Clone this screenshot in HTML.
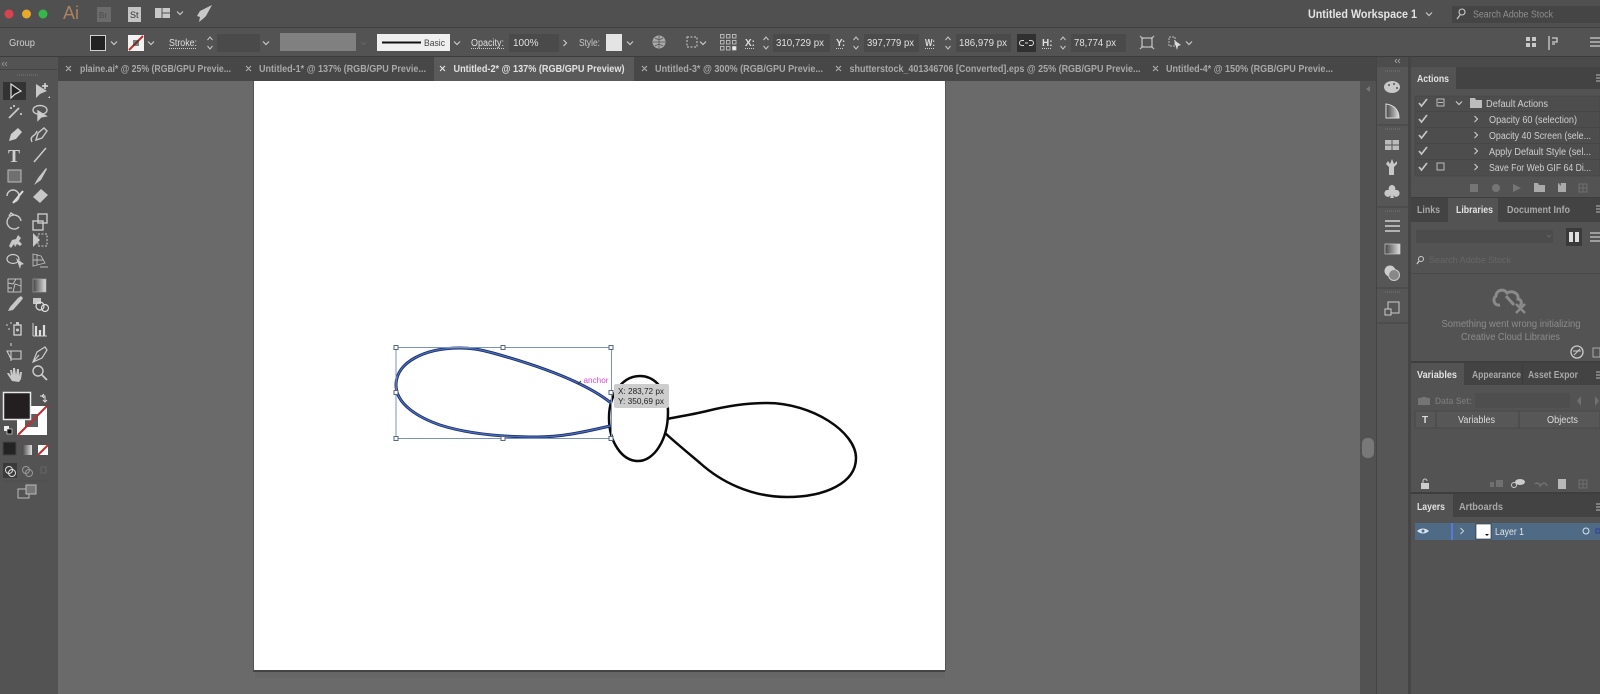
<!DOCTYPE html>
<html><head><meta charset="utf-8"><style>
html,body{margin:0;padding:0;width:1600px;height:694px;overflow:hidden;background:#535353}
svg{display:block;filter:blur(.35px)}
text{font-family:"Liberation Sans",sans-serif}
.t{fill:#cfcfcf;font-size:10px}
.b{fill:#e2e2e2;font-size:10px;font-weight:bold}
.d{fill:#a8a8a8;font-size:10px;font-weight:bold}
.i{fill:none;stroke:#c8c8c8;stroke-width:1.4}
.f{fill:#c8c8c8}
.c{fill:none;stroke:#c4c4c4;stroke-width:1.2}
</style></head><body>
<svg width="1600" height="694" viewBox="0 0 1600 694" xmlns="http://www.w3.org/2000/svg">
<defs>
<g id="chev"><path d="M-3 -1.5L0 1.5L3 -1.5" fill="none" stroke="#c8c8c8" stroke-width="1.2"/></g>
<g id="spin"><path d="M-2.5 -3L0 -6L2.5 -3M-2.5 3L0 6L2.5 3" fill="none" stroke="#c8c8c8" stroke-width="1"/></g>
<g id="rchev"><path d="M-1.500 -3L1.500 0L-1.500 3" fill="none" stroke="#c8c8c8" stroke-width="1.2"/></g>
<g id="check"><path d="M-4 0L-1.500 3L4 -4" fill="none" stroke="#c4c4c4" stroke-width="1.700"/></g>
<g id="ham"><path d="M-2 -3H2M-2 0H2M-2 3H2" stroke="#bbb" stroke-width="1"/></g>
<g id="tri"><path d="M0 2L2 0V2Z" fill="#ddd"/></g>
<linearGradient id="g1" x1="0" x2="1"><stop offset="0" stop-color="#444"/><stop offset="1" stop-color="#ddd"/></linearGradient>
</defs>

<!-- base -->
<rect width="1600" height="694" fill="#535353"/>
<rect x="0" y="0" width="1600" height="27" fill="#505050"/>
<rect x="0" y="27" width="1600" height="1" fill="#404040"/>
<rect x="0" y="28" width="1600" height="28" fill="#535353"/>
<rect x="0" y="56" width="1600" height="1" fill="#3c3c3c"/>

<!-- canvas -->
<rect x="58" y="81" width="1302" height="613" fill="#6a6a6a"/>
<rect x="57" y="81" width="1" height="613" fill="#444"/>
<rect x="253" y="81" width="692" height="590" fill="#fff"/>
<rect x="253" y="670" width="692" height="2" fill="#444"/>
<rect x="253" y="81" width="1" height="590" fill="#555"/>
<rect x="945" y="81" width="1" height="590" fill="#555"/>
<rect x="255" y="672" width="690" height="6" fill="#666"/>

<!-- tab bar -->
<rect x="58" y="57" width="1302" height="24" fill="#474747"/>
<rect x="434" y="57" width="200" height="24" fill="#5a5a5a"/>
<rect x="0" y="57" width="58" height="637" fill="#535353"/>
<g fill="none" stroke="#b5b5b5" stroke-width="1">
<path d="M66 66l5 5M71 66l-5 5M246 66l5 5M251 66l-5 5M836 66l5 5M841 66l-5 5M1153 66l5 5M1158 66l-5 5M642 66l5 5M647 66l-5 5"/>
<path d="M440 66l5 5M445 66l-5 5" stroke="#eee"/>
</g>
<text class="d" x="80" y="72" textLength="151" lengthAdjust="spacingAndGlyphs">plaine.ai* @ 25% (RGB/GPU Previe...</text>
<text class="d" x="259" y="72" textLength="167" lengthAdjust="spacingAndGlyphs">Untitled-1* @ 137% (RGB/GPU Previe...</text>
<text class="b" x="453.500" y="72" textLength="171" lengthAdjust="spacingAndGlyphs" fill="#eee">Untitled-2* @ 137% (RGB/GPU Preview)</text>
<text class="d" x="655" y="72" textLength="168" lengthAdjust="spacingAndGlyphs">Untitled-3* @ 300% (RGB/GPU Previe...</text>
<text class="d" x="849.500" y="72" textLength="291" lengthAdjust="spacingAndGlyphs">shutterstock_401346706 [Converted].eps @ 25% (RGB/GPU Previe...</text>
<text class="d" x="1166" y="72" textLength="167" lengthAdjust="spacingAndGlyphs">Untitled-4* @ 150% (RGB/GPU Previe...</text>

<!-- top bar -->
<circle cx="9" cy="14" r="4.500" fill="#d9434f"/>
<circle cx="26.500" cy="14" r="4.500" fill="#e6a92a"/>
<circle cx="43" cy="14" r="4.500" fill="#35b84a"/>
<text x="63" y="19" font-size="18" fill="#ab8260" textLength="16" lengthAdjust="spacingAndGlyphs">Ai</text>
<rect x="97" y="7" width="14" height="15" fill="#6b6b6b"/>
<text x="99" y="18" font-size="8" fill="#4c4c4c">Br</text>
<rect x="128" y="7" width="13" height="15" fill="#c4c4c4"/>
<text x="130" y="18" font-size="9" fill="#333">St</text>
<rect x="155" y="8" width="15" height="10" fill="#c8c8c8"/>
<path d="M162 8v10M162 13h8" stroke="#505050" stroke-width="1"/>
<use href="#chev" x="180" y="13"/>
<path d="M212 5L200 11L197 16L200 17L199 22L204 18L206 16Z" fill="#c8c8c8"/>
<text x="1308" y="18" font-size="11.500" font-weight="bold" fill="#e4e4e4" textLength="109" lengthAdjust="spacingAndGlyphs">Untitled Workspace 1</text>
<use href="#chev" x="1429" y="14"/>
<rect x="1452" y="6" width="148" height="17" fill="#454545"/>
<circle cx="1462" cy="12" r="3" fill="none" stroke="#ccc" stroke-width="1.100"/>
<path d="M1460 15l-3 4" stroke="#ccc" stroke-width="1.200"/>
<text x="1473" y="17.500" font-size="10" fill="#8f8f8f" textLength="80" lengthAdjust="spacingAndGlyphs">Search Adobe Stock</text>

<!-- control bar -->
<text x="9" y="46" font-size="10" fill="#cfcfcf" textLength="26" lengthAdjust="spacingAndGlyphs">Group</text>
<rect x="90.500" y="35.500" width="15" height="15" fill="#222" stroke="#d0d0d0" stroke-width="1"/>
<use href="#chev" x="114" y="43"/>
<rect x="128" y="35" width="16" height="16" fill="#f2f2f2"/>
<path d="M129 50L143 36" stroke="#c03030" stroke-width="2"/>
<rect x="133" y="40" width="6" height="6" fill="#333" opacity=".6"/>
<use href="#chev" x="151" y="43"/>
<text x="169" y="46" font-size="10" fill="#dedede" textLength="28" lengthAdjust="spacingAndGlyphs">Stroke:</text>
<path d="M169 48.500h28" stroke="#ccc" stroke-dasharray="1 1"/>
<use href="#spin" x="210" y="43"/>
<rect x="217" y="34" width="43" height="18" fill="#4a4a4a"/>
<use href="#chev" x="266" y="43"/>
<rect x="280" y="33" width="76" height="18" fill="#808080"/>
<path d="M361 42l2.500 2.500 2.500-2.500" fill="none" stroke="#666"/>
<rect x="377" y="34" width="73" height="17" fill="#efefef"/>
<rect x="382" y="41.500" width="39" height="2" fill="#111"/>
<text x="424" y="46" font-size="9" fill="#444" textLength="21" lengthAdjust="spacingAndGlyphs">Basic</text>
<use href="#chev" x="457" y="43"/>
<text x="471" y="46" font-size="10" fill="#dedede" textLength="33" lengthAdjust="spacingAndGlyphs">Opacity:</text>
<path d="M471 48.500h33" stroke="#ccc" stroke-dasharray="1 1"/>
<rect x="509" y="34" width="50" height="18" fill="#4a4a4a"/>
<text x="513" y="46" font-size="10" fill="#e0e0e0">100%</text>
<use href="#rchev" x="565" y="43"/>
<text x="579" y="46" font-size="10" fill="#c8c8c8" textLength="21" lengthAdjust="spacingAndGlyphs">Style:</text>
<rect x="606" y="34" width="16" height="17" fill="#e4e4e4"/>
<use href="#chev" x="630" y="43"/>
<circle cx="659" cy="42" r="6.500" fill="#aaa"/>
<path d="M653 42h12M659 36v12M655 38q4 3 8 0M655 46q4-3 8 0" stroke="#555" fill="none" stroke-width=".8"/>
<rect x="687" y="37" width="10" height="10" fill="none" stroke="#cfcfcf" stroke-dasharray="2 1.500"/>
<use href="#chev" x="703" y="43"/>
<g fill="none" stroke="#cfcfcf" stroke-width=".8">
<rect x="720.500" y="34.500" width="3.500" height="3.500"/><rect x="726.500" y="34.500" width="3.500" height="3.500"/><rect x="732.500" y="34.500" width="3.500" height="3.500"/>
<rect x="720.500" y="40.500" width="3.500" height="3.500"/><rect x="726.500" y="40.500" width="3.500" height="3.500"/><rect x="732.500" y="40.500" width="3.500" height="3.500"/>
<rect x="720.500" y="46.500" width="3.500" height="3.500"/><rect x="726.500" y="46.500" width="3.500" height="3.500"/><rect x="732.500" y="46.500" width="3.500" height="3.500" fill="#eee"/>
</g>
<text x="745" y="46" font-size="10" fill="#dedede" font-weight="bold">X:</text>
<path d="M745 48.500h9" stroke="#ccc" stroke-dasharray="1 1"/>
<use href="#spin" x="766" y="43"/>
<rect x="773" y="34" width="57" height="18" fill="#4a4a4a"/>
<text x="776" y="46" font-size="10" fill="#e0e0e0" textLength="48" lengthAdjust="spacingAndGlyphs">310,729 px</text>
<text x="836" y="46" font-size="10" fill="#dedede" font-weight="bold">Y:</text>
<path d="M836 48.500h8" stroke="#ccc" stroke-dasharray="1 1"/>
<use href="#spin" x="856" y="43"/>
<rect x="864" y="34" width="55" height="18" fill="#4a4a4a"/>
<text x="867" y="46" font-size="10" fill="#e0e0e0" textLength="47" lengthAdjust="spacingAndGlyphs">397,779 px</text>
<text x="925" y="46" font-size="10" fill="#dedede" font-weight="bold" textLength="10" lengthAdjust="spacingAndGlyphs">W:</text>
<path d="M925 48.500h10" stroke="#ccc" stroke-dasharray="1 1"/>
<use href="#spin" x="948" y="43"/>
<rect x="956" y="34" width="55" height="18" fill="#4a4a4a"/>
<text x="959" y="46" font-size="10" fill="#e0e0e0" textLength="48" lengthAdjust="spacingAndGlyphs">186,979 px</text>
<rect x="1017" y="34" width="19" height="18" fill="#303030"/>
<path d="M1025 43h3M1024 40.500h-2a2.500 2.500 0 0 0 0 5h2M1029 40.500h2a2.500 2.500 0 0 1 0 5h-2" fill="none" stroke="#ddd" stroke-width="1"/>
<text x="1042" y="46" font-size="10" fill="#dedede" font-weight="bold">H:</text>
<path d="M1042 48.500h9" stroke="#ccc" stroke-dasharray="1 1"/>
<use href="#spin" x="1063" y="43"/>
<rect x="1071" y="34" width="55" height="18" fill="#4a4a4a"/>
<text x="1074" y="46" font-size="10" fill="#e0e0e0" textLength="42" lengthAdjust="spacingAndGlyphs">78,774 px</text>
<g class="c"><rect x="1142" y="38" width="10" height="9"/><path d="M1140 36l3 3M1154 36l-3 3M1140 49l3-3M1154 49l-3-3"/></g>
<rect x="1169" y="37" width="6" height="9" fill="none" stroke="#bbb" stroke-dasharray="2 1"/>
<path d="M1174 40l7 5-3 1-1 4Z" fill="#ddd"/>
<use href="#chev" x="1189" y="43"/>
<g class="f"><rect x="1526" y="37" width="4" height="4"/><rect x="1532" y="37" width="4" height="4"/><rect x="1526" y="43" width="4" height="4"/><rect x="1532" y="43" width="4" height="4"/></g>
<path d="M1549 36v14M1552 38h5v4h-5M1552 44h3" fill="none" stroke="#cfcfcf" stroke-width="1.300"/>
<path d="M1590 38h10M1590 42h10M1590 46h10" stroke="#cfcfcf" stroke-width="1.300"/>

<!-- left tool strip -->
<path d="M4 62l-2 2 2 2M7 62l-2 2 2 2" fill="none" stroke="#999" stroke-width=".8"/>
<rect x="0" y="69" width="57" height="1" fill="#444"/>
<path d="M17 75h22" stroke="#777" stroke-dasharray="1 1"/>
<rect x="3" y="82" width="23" height="18" fill="#333"/>
<path d="M11 84L11 98L14.500 94.500L21 91Z" fill="#222" stroke="#ddd" stroke-width="1.200"/>
<path d="M36 84L36 98L40 94L47 91Z" class="f"/><path d="M42 86h6M45 83v6" stroke="#ddd" stroke-width="1.500"/>
<use href="#tri" x="48" y="96"/>
<g class="i">
<path d="M9 118L19 108M10 108h2M14 105v2M20 114h2" stroke-width="1.800"/>
<ellipse cx="40" cy="110" rx="7" ry="4.500"/>
<path d="M38 111l0 9 3-3 5-1Z" fill="#cfcfcf"/>
<path d="M9 141l2-7 7-6 4 4-6 7Z M9 141l5-5" fill="#cfcfcf" stroke="none"/>
<path d="M32 142q-2-4 1-6t4-5M36 140l2-7 6-5 3 3-5 7Z"/>
</g>
<text x="8" y="162" font-size="18" font-weight="bold" fill="#cfcfcf" style="font-family:'Liberation Serif',serif">T</text>
<path d="M34 162L46 148" stroke="#cfcfcf" stroke-width="1.400"/>
<rect x="8" y="170" width="13" height="12" fill="#707070" stroke="#bbb"/>
<path d="M34 185L38 178L46 168L47 169L41 180Z" class="f"/>
<path d="M7 196a6 6 0 1 1 6 6" fill="none" stroke="#ccc" stroke-width="1.400"/><path d="M13 203L23 191" stroke="#ddd" stroke-width="2"/>
<path d="M33 197L41 189L48 195L40 203Z" class="f"/>
<g class="i">
<path d="M21 221a7 7 0 1 0-2 6M9 216l2-3 3 2"/>
<rect x="33" y="221" width="10" height="9"/><rect x="38" y="214" width="9" height="9"/>
</g>
<path d="M9 246l3-6 4-1 2-4 3 3-2 3 3 3-2 2-3-2-2 3-1-3-3 4Z" class="f"/>
<path d="M33 233l7 7-7 7Z" class="f"/><rect x="38" y="234" width="9" height="12" fill="none" stroke="#ccc" stroke-dasharray="2 1.500"/>
<ellipse cx="13" cy="259" rx="6" ry="4.500" fill="none" stroke="#ccc" stroke-width="1.200"/><path d="M16 258l8 6-3 1-1 4Z" class="f"/>
<path d="M33 254l8 2 4 7-12 3Z M37 254v11M33 260l10 0" fill="none" stroke="#bbb" stroke-width=".9"/><path d="M40 267h8" stroke="#bbb"/>
<g fill="none" stroke="#c8c8c8" stroke-width=".9"><rect x="8" y="279" width="13" height="13"/><path d="M8 283l5 1 3-5M21 286l-6-2-2 8M8 288l4 0"/></g>
<rect x="33" y="279" width="13" height="13" fill="url(#g1)" stroke="#aaa" stroke-width=".6"/>
<path d="M8 311l2-4 8-9 3-2 2 2-2 3-8 9Z" class="f"/>
<rect x="33" y="298" width="8" height="6" class="f"/><circle cx="40" cy="306" r="4" fill="none" stroke="#ddd" stroke-width="1.200"/><circle cx="45" cy="308" r="3.500" fill="none" stroke="#ddd" stroke-width="1.200"/>
<rect x="14" y="325" width="7" height="10" fill="none" stroke="#ddd" stroke-width="1.200"/><circle cx="17.500" cy="330" r="1.500" class="f"/><path d="M6 325h2M10 323h2M8 329h2" stroke="#ccc"/><rect x="16" y="322" width="3" height="3" class="f"/>
<path d="M33 336V323M33 336h14" stroke="#ccc" stroke-width="1" fill="none"/><path d="M36 326v10M40 330v6M44 325v11" stroke="#ddd" stroke-width="2.200"/>
<path d="M11 346v-3M7 351h14V359H11Z M11 351V361" fill="none" stroke="#ccc" stroke-width="1.100"/>
<path d="M33 362L37 352L45 347L47 350L42 358Z M33 362l6-7" fill="none" stroke="#ccc" stroke-width="1.200"/>
<path d="M12 381l-4-6-1-2 2 0 2 3-1-6 2 0 1 5 0-7 2 0 1 7 1-6 2 0 0 7 1-4 2 0-1 7-2 3Z" class="f"/>
<circle cx="38" cy="371" r="5" fill="none" stroke="#ccc" stroke-width="1.400"/><path d="M42 375l5 5" stroke="#ccc" stroke-width="1.800"/>

<!-- fill/stroke -->
<path d="M40 396h5v6M43 400l2 2 2-2M44 394l-2 2 2 2" fill="none" stroke="#ddd" stroke-width="1"/>
<rect x="17" y="406" width="30" height="29" fill="#fff"/>
<rect x="25" y="414" width="13" height="13" fill="#5e5e5e"/>
<path d="M18 435L47 406" stroke="#b92f34" stroke-width="2"/>
<rect x="3.500" y="392.500" width="27" height="27" fill="#231f20" stroke="#e8e8e8" stroke-width="1.500"/>
<rect x="4" y="426" width="5" height="5" fill="#eee"/><rect x="7" y="429" width="5" height="5" fill="#111" stroke="#eee" stroke-width=".6"/>
<rect x="3" y="442" width="13" height="13" fill="#232323" stroke="#444"/>
<rect x="22" y="445" width="10" height="10" fill="url(#g1)"/>
<rect x="38" y="445" width="10" height="10" fill="#fff"/><path d="M38 455L48 445" stroke="#c03030" stroke-width="2"/>
<rect x="3" y="463" width="14" height="15" fill="#3a3a3a"/>
<circle cx="9" cy="470" r="3.500" fill="none" stroke="#ddd"/><circle cx="12" cy="473" r="3.500" fill="none" stroke="#ddd"/>
<circle cx="26" cy="470" r="3.500" fill="none" stroke="#999"/><circle cx="29" cy="473" r="3.500" fill="none" stroke="#999"/>
<rect x="41" y="467" width="5" height="6" fill="none" stroke="#666"/>
<path d="M3 481h45" stroke="#4c4c4c"/>
<rect x="18" y="489" width="11" height="9" fill="none" stroke="#bbb"/><rect x="26" y="485" width="10" height="9" fill="#777" stroke="#bbb"/>

<!-- artwork -->
<path d="M667 419C682 416 695 414 707 411C727 406 747 403 767 403C812 403 856 432 856 458C856 483 825 497 787 497C750 497 720 481 700 463C687 452 676 443 665 433" fill="none" stroke="#0a0a0a" stroke-width="2.500"/>
<path d="M640 376C622 376 609 395 609 418C609 442 622 461 638 461C654 461 668 440 668 412C668 392 656 376 640 376Z" fill="none" stroke="#0a0a0a" stroke-width="2.500"/>
<path d="M611 403C585 382 540 366 493 353C478 349 470 348 460 348C425 348 396 362 396 385C396 405 420 418 440 425C465 433 500 437 537 437C560 437 580 433 610 426" fill="none" stroke="#1c2f68" stroke-width="3"/>
<path d="M611 403C585 382 540 366 493 353C478 349 470 348 460 348C425 348 396 362 396 385C396 405 420 418 440 425C465 433 500 437 537 437C560 437 580 433 610 426" fill="none" stroke="#4a6fc0" stroke-width="1.200"/>
<rect x="396" y="347.500" width="215.500" height="91" fill="none" stroke="#7b93b8" stroke-width="1"/>
<g fill="#fff" stroke="#56667e" stroke-width="1">
<rect x="394" y="345.500" width="4" height="4"/><rect x="501" y="345.500" width="4" height="4"/><rect x="609" y="345.500" width="4" height="4"/>
<rect x="394" y="390.500" width="4" height="4"/><rect x="609" y="390.500" width="4" height="4"/>
<rect x="394" y="436.500" width="4" height="4"/><rect x="501" y="436.500" width="4" height="4"/><rect x="609" y="436.500" width="4" height="4"/>
</g>
<path d="M578 384l3-3" stroke="#333" stroke-width="1"/>
<text x="583.500" y="383" font-size="8" fill="#d848d8" textLength="25" lengthAdjust="spacingAndGlyphs">anchor</text>
<rect x="614" y="384" width="55" height="24" rx="2" fill="#cdcdcd"/>
<text x="618" y="394" font-size="8" fill="#222" textLength="46" lengthAdjust="spacingAndGlyphs">X: 283,72 px</text>
<text x="618" y="404" font-size="8" fill="#222" textLength="46" lengthAdjust="spacingAndGlyphs">Y: 350,69 px</text>

<!-- scrollbar & dock -->
<rect x="1360" y="57" width="16" height="637" fill="#525252"/>
<rect x="1360" y="57" width="16" height="24" fill="#474747"/>
<path d="M1370 86l-4 3 4 3" fill="#777"/>
<rect x="1362" y="438" width="12" height="20" rx="5" fill="#787878"/>
<rect x="1376" y="57" width="1" height="637" fill="#444"/>
<rect x="1377" y="57" width="31" height="637" fill="#565656"/>
<rect x="1377" y="57" width="31" height="10" fill="#4c4c4c"/>
<rect x="1408" y="57" width="3" height="637" fill="#454545"/>
<path d="M1397 59l-2 2 2 2M1400 59l-2 2 2 2" fill="none" stroke="#aaa" stroke-width=".8"/>
<g stroke="#444"><path d="M1377 125h31M1377 207h31M1377 288h31M1377 323h31"/></g>
<g stroke="#777" stroke-dasharray="1 1"><path d="M1385 71h15M1385 129h15M1385 211h15M1385 292h15"/></g>
<ellipse cx="1392" cy="87" rx="8" ry="6" class="f"/><circle cx="1389" cy="85" r="1" fill="#555"/><circle cx="1394" cy="84" r="1" fill="#555"/><circle cx="1397" cy="88" r="1" fill="#555"/>
<path d="M1386 104v14h13c0-8-5-13-13-14Z" fill="url(#g1)" stroke="#ddd"/>
<rect x="1385" y="140" width="14" height="10" fill="#bbb"/><path d="M1392 140v10M1385 145h14" stroke="#555"/>
<path d="M1389 175v-8l-3-3 2-3 2 3 2-5 2 5 3-3 0 3-3 3v8Z" class="f"/>
<path d="M1392 185a3.500 3.500 0 0 1 3 5a3.500 3.500 0 1 1-2 5l1 3h-4l1-3a3.500 3.500 0 1 1-2-5a3.500 3.500 0 0 1 3-5Z" class="f"/>
<path d="M1385 221h15M1385 226h15M1385 231h15" stroke="#d0d0d0" stroke-width="1.600"/>
<rect x="1385" y="244" width="15" height="10" fill="url(#g1)" stroke="#ccc" stroke-width=".7"/>
<circle cx="1390" cy="271" r="5.500" fill="#ccc"/><circle cx="1394" cy="275" r="5.500" fill="#888" stroke="#ccc"/>
<rect x="1388" y="302" width="11" height="11" fill="none" stroke="#ccc"/><rect x="1385" y="309" width="6" height="6" fill="#555" stroke="#ccc"/>

<!-- top strip above panels -->
<rect x="1411" y="57" width="189" height="10" fill="#4a4a4a"/>
<!-- Actions panel -->
<rect x="1411" y="67" width="189" height="22" fill="#434343"/>
<rect x="1411" y="67" width="45" height="22" fill="#535353"/>
<text class="b" x="1417" y="82" textLength="32" lengthAdjust="spacingAndGlyphs">Actions</text>
<use href="#ham" x="1598" y="78"/>
<rect x="1411" y="89" width="189" height="109" fill="#535353"/>
<rect x="1415" y="96" width="185" height="80" fill="#4d4d4d" stroke="#444" stroke-width=".5"/>
<g stroke="#464646"><path d="M1415 111.500H1600M1415 127.500H1600M1415 143.500H1600M1415 159.500H1600"/></g>
<use href="#check" x="1423" y="103"/><use href="#check" x="1423" y="119"/><use href="#check" x="1423" y="135"/><use href="#check" x="1423" y="151"/><use href="#check" x="1423" y="167"/>
<rect x="1437" y="99" width="7" height="7" fill="none" stroke="#bbb"/><path d="M1438 102.500h5" stroke="#bbb"/>
<rect x="1437" y="163" width="7" height="7" fill="none" stroke="#bbb"/>
<use href="#chev" x="1459" y="103"/>
<path d="M1470 98h5l1 2h6v8h-12Z" fill="#bcbcbc"/>
<text class="t" x="1486" y="107" textLength="62" lengthAdjust="spacingAndGlyphs">Default Actions</text>
<use href="#rchev" x="1476" y="119"/><use href="#rchev" x="1476" y="135"/><use href="#rchev" x="1476" y="151"/><use href="#rchev" x="1476" y="167"/>
<text class="t" x="1489" y="123" textLength="88" lengthAdjust="spacingAndGlyphs">Opacity 60 (selection)</text>
<text class="t" x="1489" y="139" textLength="102" lengthAdjust="spacingAndGlyphs">Opacity 40 Screen (sele...</text>
<text class="t" x="1489" y="155" textLength="102" lengthAdjust="spacingAndGlyphs">Apply Default Style (sel...</text>
<text class="t" x="1489" y="171" textLength="102" lengthAdjust="spacingAndGlyphs">Save For Web GIF 64 Di...</text>
<rect x="1470" y="184" width="8" height="8" fill="#757575"/>
<circle cx="1496" cy="188" r="4" fill="#757575"/>
<path d="M1513 184l8 4-8 4Z" fill="#757575"/>
<path d="M1534 183h4l1 2h6v7h-11Z" fill="#aaa"/>
<path d="M1558 183h8v9h-8Z" fill="#aaa"/><path d="M1558 183l3 3v-3" fill="#666"/>
<rect x="1579" y="184" width="8" height="8" fill="none" stroke="#6f6f6f"/><path d="M1583 184v8M1579 188h8" stroke="#6f6f6f"/>

<!-- Links/Libraries -->
<rect x="1411" y="197" width="189" height="1" fill="#3e3e3e"/>
<rect x="1411" y="198" width="189" height="24" fill="#434343"/>
<rect x="1448" y="198" width="50" height="24" fill="#535353"/>
<text class="d" x="1417" y="213" textLength="23" lengthAdjust="spacingAndGlyphs">Links</text>
<text class="b" x="1456" y="213" textLength="37" lengthAdjust="spacingAndGlyphs">Libraries</text>
<text class="d" x="1507" y="213" textLength="63" lengthAdjust="spacingAndGlyphs">Document Info</text>
<use href="#ham" x="1598" y="209"/>
<rect x="1411" y="222" width="189" height="140" fill="#535353"/>
<rect x="1416" y="230" width="137" height="13" fill="#4c4c4c"/>
<path d="M1547 235l2 2 2-2" fill="none" stroke="#666"/>
<rect x="1566" y="228" width="16" height="18" fill="#3a3a3a"/>
<path d="M1569 232h4v10h-4ZM1575 232h4v10h-4Z" fill="#ddd"/>
<path d="M1590 233h10M1590 237h10M1590 241h10" stroke="#ccc" stroke-width="1.300"/>
<circle cx="1421" cy="259" r="2.500" fill="none" stroke="#ccc"/><path d="M1419 261l-2 3" stroke="#ccc" stroke-width="1.200"/>
<text x="1429" y="263" font-size="9.500" fill="#666" textLength="82" lengthAdjust="spacingAndGlyphs">Search Adobe Stock</text>
<path d="M1411 273.500H1600" stroke="#4a4a4a"/>
<g fill="none" stroke="#8a8a8a" stroke-width="3">
<path d="M1500 305c-6 1-8-6-4-9c0-6 8-8 11-3c5-3 12 0 11 6c4 1 4 5 2 7"/>
<path d="M1506 296l8 9"/><path d="M1516 304l9 9M1525 304l-9 9" stroke-width="2.500"/>
</g>
<text x="1441.500" y="327" font-size="10.500" fill="#8c8c8c" textLength="139" lengthAdjust="spacingAndGlyphs">Something went wrong initializing</text>
<text x="1461" y="340" font-size="10.500" fill="#8c8c8c" textLength="99" lengthAdjust="spacingAndGlyphs">Creative Cloud Libraries</text>
<circle cx="1577" cy="352" r="6" fill="none" stroke="#ccc" stroke-width="1.300"/><path d="M1573 351h8M1574 355l6-6" stroke="#ccc"/>
<rect x="1593" y="348" width="7" height="9" fill="none" stroke="#aaa"/>

<!-- Variables -->
<rect x="1411" y="361" width="189" height="2" fill="#3e3e3e"/>
<rect x="1411" y="363" width="189" height="22" fill="#434343"/>
<rect x="1411" y="363" width="53" height="22" fill="#535353"/>
<text class="b" x="1417" y="378" textLength="40" lengthAdjust="spacingAndGlyphs">Variables</text>
<text class="d" x="1472" y="378" textLength="49" lengthAdjust="spacingAndGlyphs">Appearance</text>
<text class="d" x="1528" y="378" textLength="50" lengthAdjust="spacingAndGlyphs">Asset Expor</text>
<path d="M1522.500 364v20" stroke="#3a3a3a"/>
<use href="#ham" x="1598" y="375"/>
<rect x="1411" y="385" width="189" height="108" fill="#535353"/>
<path d="M1418 398h3l1-1h4l1 1h3v7h-12Z" fill="#757575"/>
<text x="1435" y="404" font-size="9.500" font-weight="bold" fill="#757575" textLength="37" lengthAdjust="spacingAndGlyphs">Data Set:</text>
<rect x="1475" y="393" width="95" height="15" fill="#4e4e4e"/>
<path d="M1581 396l-4 5 4 5Z" fill="#707070"/><path d="M1595 396l4 5-4 5Z" fill="#707070"/>
<rect x="1415" y="411" width="185" height="17" fill="#575757" stroke="#4a4a4a"/>
<text x="1422" y="423" font-size="10" font-weight="bold" fill="#dcdcdc">T</text>
<path d="M1436 411v17M1519 411v17" stroke="#464646"/>
<text x="1458" y="423" font-size="10" fill="#dcdcdc" textLength="37" lengthAdjust="spacingAndGlyphs">Variables</text>
<text x="1547" y="423" font-size="10" fill="#dcdcdc" textLength="31" lengthAdjust="spacingAndGlyphs">Objects</text>
<rect x="1421" y="483" width="8" height="6" fill="#ccc"/><path d="M1423 483v-2a2 2 0 0 1 4 0" fill="none" stroke="#ccc"/>
<rect x="1490" y="482" width="4" height="5" fill="#707070"/><rect x="1496" y="480" width="7" height="7" fill="#707070"/>
<circle cx="1514" cy="485" r="2.500" fill="none" stroke="#ccc"/><ellipse cx="1520" cy="482" rx="5" ry="3" fill="#ccc"/>
<path d="M1535 484a3 3 0 0 1 5 2l2-2a3 3 0 0 1 5 2" fill="none" stroke="#707070" stroke-width="1.500"/>
<path d="M1558 479h8v10h-8Z" fill="#b8b8b8"/>
<rect x="1579" y="480" width="8" height="8" fill="none" stroke="#6f6f6f"/><path d="M1583 480v8M1579 484h8" stroke="#6f6f6f"/>

<!-- Layers -->
<rect x="1411" y="492" width="189" height="2" fill="#3e3e3e"/>
<rect x="1411" y="494" width="189" height="23" fill="#434343"/>
<rect x="1411" y="494" width="42" height="23" fill="#535353"/>
<text class="b" x="1417" y="510" textLength="28" lengthAdjust="spacingAndGlyphs">Layers</text>
<text class="d" x="1459" y="510" textLength="44" lengthAdjust="spacingAndGlyphs">Artboards</text>
<use href="#ham" x="1598" y="507"/>
<rect x="1411" y="517" width="189" height="177" fill="#535353"/>
<rect x="1415" y="523" width="185" height="17" fill="#4e6a85"/>
<path d="M1417 531q6-5 12 0q-6 5-12 0Z" fill="#d8e4ee"/><circle cx="1423" cy="531" r="1.500" fill="#4e6a85"/>
<rect x="1451" y="523" width="2" height="17" fill="#5a78d8"/>
<use href="#rchev" x="1462" y="531"/>
<rect x="1476" y="524" width="15" height="15" fill="#fff" stroke="#222" stroke-width=".6"/>
<path d="M1485 534h4l-2 2Z" fill="#111"/>
<text x="1495" y="535" font-size="10" fill="#e4e4e4" textLength="29" lengthAdjust="spacingAndGlyphs">Layer 1</text>
<circle cx="1586" cy="531" r="3" fill="none" stroke="#d8e4ee"/>
<rect x="1596" y="529" width="4" height="4" fill="none" stroke="#2a3fa8"/>
</svg>
</body></html>
